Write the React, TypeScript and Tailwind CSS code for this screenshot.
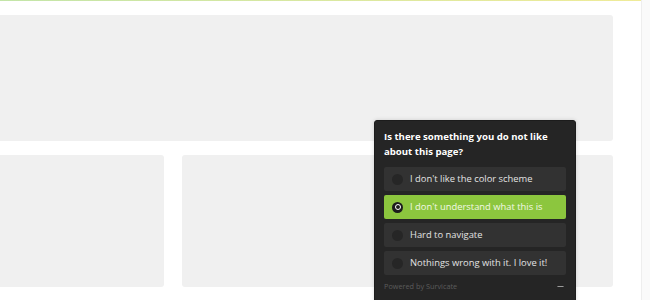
import { Minus } from "lucide-react"

const options = [
  { label: "I don't like the color scheme", selected: false },
  { label: "I don't understand what this is", selected: true },
  { label: "Hard to navigate", selected: false },
  { label: "Nothings wrong with it. I love it!", selected: false },
]

function Survey() {
  return (
    <div className="absolute left-[374px] top-[120px] w-[202px] h-[200px] rounded-[3px] bg-[#252525] border border-[#1c1c1c] px-[9px] pt-[8px] font-['Open_Sans',sans-serif] shadow-[0_0_4px_rgba(0,0,0,0.15)]">
      <p className="text-[9.6px] leading-[15px] font-bold text-white">
        Is there something you do not like about this page?
      </p>
      <div className="mt-[8px] flex flex-col gap-[4px]">
        {options.map((o) => (
          <div
            key={o.label}
            className={
              o.selected
                ? "h-[24px] rounded-[2px] bg-[#8cc63e] flex items-center pl-[8px] gap-[7px]"
                : "h-[24px] rounded-[2px] bg-[#323232] flex items-center pl-[8px] gap-[7px]"
            }
          >
            {o.selected ? (
              <span className="w-[11px] h-[11px] rounded-full bg-[#1d1d1d] flex items-center justify-center">
                <span className="w-[6px] h-[6px] rounded-full border-[1.5px] border-white" />
              </span>
            ) : (
              <span className="w-[11px] h-[11px] rounded-full bg-[#262626]" />
            )}
            <span className={o.selected ? "text-[9.4px] text-[#f2f8e6]" : "text-[9.4px] text-[#e2e2e2]"}>
              {o.label}
            </span>
          </div>
        ))}
      </div>
      <div className="mt-[6px] flex items-center justify-between pr-[1px]">
        <span className="text-[7.3px] text-[#5c5c5c]">Powered by Survicate</span>
        <Minus className="w-[9px] h-[9px] text-[#9a9a9a]" strokeWidth={3} />
      </div>
    </div>
  )
}

export default function App() {
  return (
    <main className="relative w-[650px] h-[300px] overflow-hidden bg-white flex">
      <div className="w-[641px] h-full flex flex-col">
        <div className="h-[1px] bg-gradient-to-r from-[#c3e5a8] to-[#efeb98]" />
        <div className="pt-[14px] pr-[28px] flex flex-col gap-[14px]">
          <div className="h-[126px] rounded-r-[3px] bg-[#f0f0f0]" />
          <div className="flex gap-[18px]">
            <div className="w-[164px] h-[132px] rounded-r-[3px] bg-[#f0f0f0]" />
            <div className="flex-1 h-[132px] rounded-[3px] bg-[#f0f0f0]" />
          </div>
        </div>
      </div>
      <div className="flex-1 h-full bg-[#fafafa] border-l border-[#eeeeee]" />
      <Survey />
    </main>
  )
}
